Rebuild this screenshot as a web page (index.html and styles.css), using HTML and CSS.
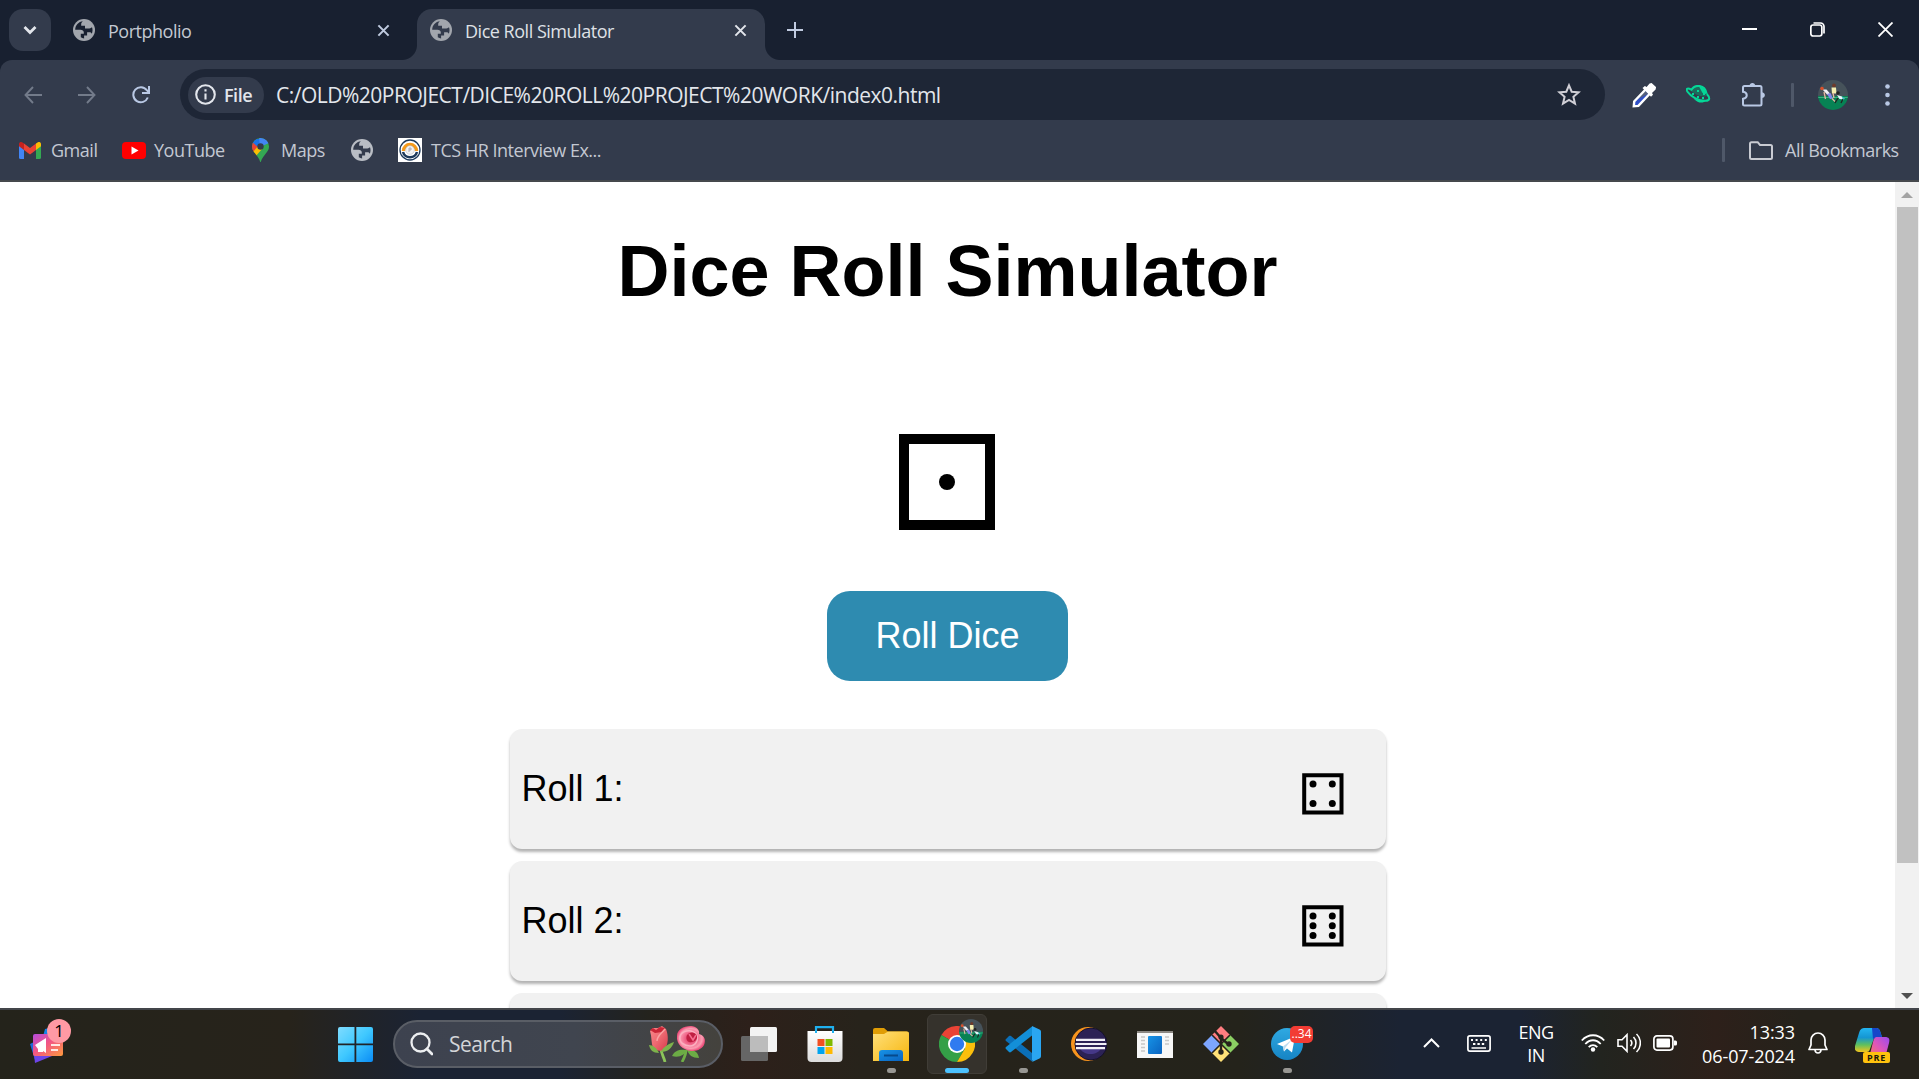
FILE: index.html
```html
<!DOCTYPE html>
<html lang="en">
<head>
<meta charset="utf-8">
<title>Dice Roll Simulator</title>
<link rel="stylesheet" href="styles.css">
</head>
<body>
<svg class="defs" width="0" height="0">
  <defs>
    <symbol id="globe" viewBox="0 0 22 22"><circle cx="11" cy="11" r="11" fill="currentColor"/><path d="M10 2.2C5.600 2.500 2.200 6.200 2.200 10.800h5.300c1.800 0 3.300 1 3.300 2.700v1.200h-3v3.600c1 .7 2.100 1.100 3.300 1.100v-3h3v-3.200h2.600c1 0 1.800.7 2.100 1.500.9-1.800 1-4.600.2-6.500-1 1-2.300 1.200-3.600 1.200H12V6.800H8.200V5c0-1.200.8-2.200 1.800-2.800z" fill="var(--cut)"/></symbol>
    <symbol id="cross" viewBox="0 0 14 14"><path d="M1.500 1.500l11 11M12.500 1.500l-11 11" stroke="currentColor" stroke-width="2.200" fill="none"/></symbol>
    <symbol id="avatar" viewBox="0 0 30 30"><clipPath id="ac"><circle cx="15" cy="15" r="15"/></clipPath><g clip-path="url(#ac)"><path fill="#46525a" d="M0 0h30v17H0z"/><path fill="#078254" d="M0 16h30v14H0z"/><path d="M0 17.500h30" stroke="#3fae80" stroke-width="1"/><circle cx="16" cy="5.500" r="1.900" fill="#6e3b2a"/><path fill="#f5efb0" d="M13.500 7.500h4.500l.5 6h-4.500z"/><path fill="#f0f0f5" d="M4.500 9.500l4 0 3.500 4-2.500 1.500z"/><circle cx="4" cy="8.500" r="1.800" fill="#d9512c"/><path fill="#8087ea" d="M9 14l3.500-1 2.500 5.500-3 .5z"/><path d="M6 12l1.500 7M14 18.500l3 3M15 13l1 5" stroke="#e5b7a0" stroke-width="1.300"/><circle cx="20" cy="13" r="1.800" fill="#222"/><path fill="#e8f4f8" d="M19 15l5 1.500 2 3-4.500-.5z"/><path fill="#35c0c8" d="M24 16.500l3 2-2 2z"/><path d="M20 18l-3 5M25 19l-2 4" stroke="#222" stroke-width="1.300"/></g></symbol>
    <linearGradient id="gWin" x1="0" y1="0" x2="1" y2="1"><stop offset="0" stop-color="#7fdcff"/><stop offset=".5" stop-color="#3fc8ff"/><stop offset="1" stop-color="#0a8cf5"/></linearGradient>
    <linearGradient id="gAd" x1="0" y1="0" x2="1" y2="1"><stop offset="0" stop-color="#b44be0"/><stop offset=".45" stop-color="#f25585"/><stop offset="1" stop-color="#ff9a3d"/></linearGradient>
    <linearGradient id="gStore" x1="0" y1="0" x2="0" y2="1"><stop offset="0" stop-color="#fff"/><stop offset="1" stop-color="#dcdcdc"/></linearGradient>
    <linearGradient id="gFold" x1="0" y1="0" x2="1" y2="1"><stop offset="0" stop-color="#ffe07a"/><stop offset="1" stop-color="#f7b50d"/></linearGradient>
    <linearGradient id="gBlue" x1="0" y1="0" x2="1" y2="1"><stop offset="0" stop-color="#1793e6"/><stop offset="1" stop-color="#0a63c0"/></linearGradient>
    <linearGradient id="gTg" x1="0" y1="0" x2="0" y2="1"><stop offset="0" stop-color="#2fa9e2"/><stop offset="1" stop-color="#1684c4"/></linearGradient>
    <linearGradient id="gCo" x1="0" y1="0" x2="0" y2="1"><stop offset="0" stop-color="#23b5f2"/><stop offset=".4" stop-color="#1596d2"/><stop offset=".7" stop-color="#5fc05e"/><stop offset="1" stop-color="#f4c51c"/></linearGradient>
    <linearGradient id="gCp" x1="1" y1="0" x2="0" y2="1"><stop offset="0" stop-color="#9a4bf0"/><stop offset=".5" stop-color="#e056b8"/><stop offset="1" stop-color="#ff7b52"/></linearGradient>
    <linearGradient id="gBud" x1="0" y1="0" x2="1" y2="1"><stop offset="0" stop-color="#f98a8c"/><stop offset=".5" stop-color="#ee6a72"/><stop offset="1" stop-color="#d83a4c"/></linearGradient>
    <radialGradient id="gRose"><stop offset="0" stop-color="#d22a55"/><stop offset=".45" stop-color="#f0668a"/><stop offset=".8" stop-color="#fb9db2"/><stop offset="1" stop-color="#ee4f7c"/></radialGradient>
  </defs>
</svg>

<header class="chrome">
  <div class="tabstrip">
    <button class="tab-search"><svg width="14" height="10" viewBox="0 0 14 10"><path d="M1.500 2l5.500 5.500L12.500 2" fill="none" stroke="#e3e6ec" stroke-width="2.800"/></svg></button>
    <div class="tab">
      <svg class="fav" width="22" height="22"><use href="#globe"/></svg>
      <span class="tab-title">Portpholio</span>
      <svg class="tab-x" width="13" height="13"><use href="#cross"/></svg>
    </div>
    <div class="tab active">
      <svg class="fav" width="22" height="22"><use href="#globe"/></svg>
      <span class="tab-title">Dice Roll Simulator</span>
      <svg class="tab-x" width="13" height="13"><use href="#cross"/></svg>
    </div>
    <svg class="new-tab" width="16" height="16" viewBox="0 0 16 16"><path d="M8 0v16M0 8h16" stroke="#c0cbe0" stroke-width="2"/></svg>
    <div class="win-controls">
      <svg width="15" height="15" viewBox="0 0 15 15"><path d="M0 7h15" stroke="#fff" stroke-width="2"/></svg>
      <svg width="15" height="15" viewBox="0 0 15 15" fill="none" stroke="#fff" stroke-width="1.700"><rect x=".85" y="3" width="11" height="11" rx="2.200"/><path d="M3.500 1h7a3.500 3.500 0 013.500 3.500v7"/></svg>
      <svg width="15" height="15" viewBox="0 0 15 15"><path d="M.5.5l14 14M14.500.5l-14 14" stroke="#fff" stroke-width="1.800"/></svg>
    </div>
  </div>

  <div class="toolbar">
    <svg class="nav dim" width="18" height="18" viewBox="0 0 18 18"><path d="M18 9H1.500M9 1L1.500 9 9 17" fill="none" stroke="currentColor" stroke-width="1.900"/></svg>
    <svg class="nav dim" width="18" height="18" viewBox="0 0 18 18"><path d="M0 9h16.500M9 1l7.500 8L9 17" fill="none" stroke="currentColor" stroke-width="1.900"/></svg>
    <svg class="nav" width="18" height="18" viewBox="0 0 18 18"><path d="M15.800 11.500A7.500 7.500 0 1 1 14.800 4.200L17 6.600M17 0v7h-7" fill="none" stroke="currentColor" stroke-width="2"/></svg>
    <div class="omnibox">
      <div class="chip">
        <svg width="21" height="21" viewBox="0 0 21 21"><circle cx="10.500" cy="10.500" r="9.300" fill="none" stroke="#e3e6ec" stroke-width="2.100"/><path d="M10.500 9.500v6M10.500 5.300v2.300" stroke="#e3e6ec" stroke-width="2.100"/></svg>
        <span>File</span>
      </div>
      <span class="url">C:/OLD%20PROJECT/DICE%20ROLL%20PROJECT%20WORK/index0.html</span>
      <svg class="star" width="24" height="24" viewBox="0 0 24 24"><path d="M12 2.300l2.700 6.400 6.900.6-5.200 4.500 1.600 6.800-6-3.600-6 3.600 1.600-6.800L2.400 9.300l6.900-.6z" fill="none" stroke="#d0cfd6" stroke-width="2"/></svg>
    </div>
    <div class="ext">
      <svg width="24" height="26" viewBox="0 0 24 26"><path d="M3 20L13 9l3.500 3.500L7 23l-4.500 1z" fill="#2f4fc7"/><path d="M6 17l7-8 3 3z" fill="#55607a"/><path d="M14 7L2.200 19.500l-.4 4.800 4.600-.4L18 11.500" fill="none" stroke="#fff" stroke-width="2.400"/><path d="M10.500 6l2.400-2 1.700 1 3-3.500 2-.5 4.500 4-.5 2.500-3.600 3.600 1 1.600-2 2z" fill="#fff"/></svg>
      <svg width="25" height="19" viewBox="0 0 25 19"><path d="M5 4.500C1 2.500-.3 4 1.500 6.800c3 4.500 11 9.200 18 9 4.500-.2 5-3 1-7" fill="none" stroke="#05d797" stroke-width="2"/><path d="M4.500 5.500C8-1.500 19-.5 20.500 9c.3 3-3 3.500-8 1.500-4-1.600-7-3.500-8-5z" fill="#1c6b5c"/><path d="M5 5.500C9-1.500 19-.5 20.500 8.500" fill="none" stroke="#05d797" stroke-width="2"/><path d="M13 1.500c5 .5 7 4 7.500 7.500l-4-1z" fill="#05d797"/><path d="M8 14l12 1.500c-2.500 3-8 3-12-1.500z" fill="#05d797"/><path d="M6 9h2M11 6h2M11 12h2M16 13h2M17 9h2" stroke="#05d797" stroke-width="1.800"/></svg>
      <svg width="25" height="25" viewBox="0 0 25 25"><path d="M3.500 4h15.500a1.500 1.500 0 011.500 1.500v16.500a1.500 1.500 0 01-1.500 1.500H3.500A1.500 1.500 0 012 22v-5.200c5-.8 5-6.200 0-7V5.500A1.500 1.500 0 013.500 4z" fill="none" stroke="#b9c8e4" stroke-width="2"/><path d="M8.500 4c0-4 5.800-4 5.800 0zM20.500 10.200c4.500 0 4.500 5.800 0 5.800z" fill="#b9c8e4"/></svg>
    </div>
    <i class="sep"></i>
    <svg class="profile" width="30" height="30"><use href="#avatar"/></svg>
    <svg class="dots" width="5" height="22" viewBox="0 0 5 22" fill="#b9c8e4"><circle cx="2.500" cy="2.500" r="2.300"/><circle cx="2.500" cy="11" r="2.300"/><circle cx="2.500" cy="19.500" r="2.300"/></svg>
  </div>

  <nav class="bookmarks">
    <a class="bm b-gmail"><svg width="22" height="17" viewBox="0 0 22 17"><path d="M0 2v13.500A1.500 1.500 0 001.500 17H5V6z" fill="#4285f4"/><path d="M22 2v13.500a1.500 1.500 0 01-1.500 1.500H17V6z" fill="#34a853"/><path d="M17 1.500V8l5-3.800V2c0-2-2.200-2.600-3.500-1.500z" fill="#fbbc04"/><path d="M5 8V1.500L11 6l6-4.500V8l-6 4.500z" fill="#ea4335"/><path d="M0 2v2.200L5 8V1.500L3.500.5C2.200-.6 0 0 0 2z" fill="#c5221f"/></svg><span>Gmail</span></a>
    <a class="bm b-yt"><svg width="24" height="17" viewBox="0 0 24 17"><rect width="24" height="17" rx="4" fill="#f00"/><path d="M9.500 4.500v8l7-4z" fill="#fff"/></svg><span>YouTube</span></a>
    <a class="bm b-maps"><svg width="17" height="24" viewBox="0 0 17 24"><clipPath id="pin"><path d="M8.500 0A8.400 8.400 0 0117 8.500c0 4-2.500 6-4.500 8.700C10.500 20 9.700 21 9 23.400c-.2.800-.8.800-1 0-.7-2.400-1.500-3.600-3.500-6.200C2.500 14.500 0 12.500 0 8.500A8.400 8.400 0 018.500 0z"/></clipPath><g clip-path="url(#pin)"><path d="M0 0h17v24H0z" fill="#34a853"/><path d="M0 5l6 4 7-8H4z" fill="#1a73e8"/><path d="M7 0h10v5L8 9z" fill="#4285f4"/><path d="M0 4l6 5-6 6z" fill="#ea4335"/><path d="M1 14l6-7 4 3-8 9z" fill="#fbbc04"/></g><circle cx="8.500" cy="8.500" r="3.200" fill="#333b4c"/></svg><span>Maps</span></a>
    <a class="bm b-globe"><svg width="22" height="22"><use href="#globe"/></svg></a>
    <a class="bm b-tcs"><svg width="24" height="24" viewBox="0 0 24 24"><path fill="#fff" d="M0 0h24v24H0z"/><circle cx="12" cy="12" r="10" fill="none" stroke="#1d3a5c" stroke-width="1.300"/><path d="M5.500 13a6.500 6.500 0 1113 0" fill="none" stroke="#f49a1c" stroke-width="3.500"/><path d="M5 14a7.300 7.300 0 0014 0" fill="none" stroke="#1d3a5c" stroke-width="2.600"/><circle cx="12" cy="12" r="4.300" fill="#f3f3f3" stroke="#b9c0c8" stroke-width=".6"/><path d="M11 14v-4h2v2h-2" fill="none" stroke="#99a" stroke-width=".8"/></svg><span>TCS HR Interview Ex...</span></a>
    <i class="sep"></i>
    <a class="bm b-all"><svg width="24" height="19" viewBox="0 0 24 19"><path d="M2.500 1.200h6.200L11 4h10.500A1.500 1.500 0 0123 5.500v11a1.500 1.500 0 01-1.500 1.500h-19A1.500 1.500 0 011 16.500v-13.800a1.500 1.500 0 011.500-1.500z" fill="none" stroke="#c9cbd2" stroke-width="2"/></svg><span>All Bookmarks</span></a>
  </nav>
</header>

<div class="viewport">
  <main class="page">
    <h1>Dice Roll Simulator</h1>
    <svg class="die" width="97" height="96" viewBox="0 0 97 96"><rect x="5" y="5" width="86" height="86" fill="none" stroke="#000" stroke-width="10"/><circle cx="48" cy="48" r="8"/></svg>
    <button class="roll-btn">Roll Dice</button>
    <ul class="history">
      <li><span>Roll 1:</span><svg width="42" height="42" viewBox="0 0 42 42"><path d="M2.200 2.200h37.300v37.300H2.200z" fill="none" stroke="#000" stroke-width="4"/><circle cx="11" cy="11" r="3.500"/><circle cx="30.300" cy="11" r="3.500"/><circle cx="11" cy="30.500" r="3.500"/><circle cx="30.300" cy="30.500" r="3.500"/></svg></li>
      <li><span>Roll 2:</span><svg width="42" height="42" viewBox="0 0 42 42"><path d="M2.200 2.200h37.300v37.300H2.200z" fill="none" stroke="#000" stroke-width="4"/><circle cx="11" cy="11" r="3.500"/><circle cx="30.300" cy="11" r="3.500"/><circle cx="11" cy="20.700" r="3.500"/><circle cx="30.300" cy="20.700" r="3.500"/><circle cx="11" cy="30.500" r="3.500"/><circle cx="30.300" cy="30.500" r="3.500"/></svg></li>
      <li></li>
    </ul>
  </main>
  <div class="scrollbar">
    <svg width="12" height="6" viewBox="0 0 12 6"><path d="M6 0l6 6H0z" fill="#a3a3a3"/></svg>
    <div class="thumb"></div>
    <svg class="down" width="12" height="6" viewBox="0 0 12 6"><path d="M6 6l6-6H0z" fill="#505050"/></svg>
  </div>
</div>

<footer class="taskbar">
  <div class="widget">
    <svg width="34" height="38" viewBox="0 0 34 38"><path d="M15 3l13-3 4 14H12z" fill="#1583e8"/><path d="M0 18l6-3 16 12-17 7z" fill="#2268d8"/><path d="M4 28h23L5 37z" fill="#6d45e8"/><rect x="3" y="8" width="30" height="22" rx="2" fill="url(#gAd)"/><path d="M5 19l11-7v15l-3-2v1H8v-3z" fill="#fff"/><path d="M21 19h9M21 24h7" stroke="#ffe9e4" stroke-width="2"/></svg>
    <b class="w-badge">1</b>
  </div>
  <div class="apps">
    <div class="app start"><svg width="35" height="35" viewBox="0 0 35 35"><path d="M2 0h14.500v16.500H0V2a2 2 0 012-2zM18.300 0H33a2 2 0 012 2v14.500H18.300zM0 18.300h16.500V35H2a2 2 0 01-2-2zM18.300 18.300H35V33a2 2 0 01-2 2H18.300z" fill="url(#gWin)"/></svg></div>
    <div class="search">
      <svg width="23" height="24" viewBox="0 0 23 24"><circle cx="10.500" cy="10.500" r="9" fill="none" stroke="#eceef0" stroke-width="2.300"/><path d="M17 17l5 5" stroke="#eceef0" stroke-width="2.800" stroke-linecap="round"/></svg>
      <span>Search</span>
      <svg class="roses" width="58" height="36" viewBox="0 0 58 36"><path d="M13 22c0 6 3 9 4 14" fill="none" stroke="#8cc45a" stroke-width="2.800"/><path d="M2 5l3-3 5 0 4-2 4 3c3 8 2 15-1 20-4 3-9 2-12-1C3 17 4 11 2 5z" fill="url(#gBud)"/><path d="M2 4l3-2 3 2 4-3 5 1-3 4-7 1z" fill="#c92536"/><path d="M17 3c-4 5-8 7-8 12" fill="none" stroke="#f9a2a2" stroke-width="1.500"/><path d="M1 19c4 0 8 3 10 8-6 0-9-3-10-8zM26 16c-6 2-11 5-13 10 7 0 11-4 13-10z" fill="#7db24c"/><path d="M38 24c0 5-2 8-4 12" stroke="#6fae46" stroke-width="2.800" fill="none"/><path d="M24 30c3-6 8-7 15-6-2 5-8 8-15 6zM39 24c7-1 11 2 12 8-7 0-10-3-12-8z" fill="#6cab45"/><path d="M29 10c0-6 6-10 14-10 5 0 9 4 8 8 6 2 7 6 5 11-3 5-8 6-13 6-8-1-15-7-14-15z" fill="url(#gRose)"/><path d="M32 11c1-6 11-9 16-3 4 6-1 12-6 12-6 0-11-4-10-9z" fill="none" stroke="#fbb0c0" stroke-width="1.500"/><path d="M39 9c3-4 9-3 10 1s-4 7-8 6c-3-1-3-5-2-7z" fill="#c01f42"/><path d="M41 8l4 6 3-5" fill="none" stroke="#f76d90" stroke-width="1.500"/></svg>
    </div>
    <div class="app"><svg width="36" height="34" viewBox="0 0 36 34"><rect y="9" width="27" height="25" rx="1.500" fill="#666"/><rect x="9" width="27" height="25" rx="1.500" fill="#f3f3f3"/><path d="M9 9h18v16H9z" fill="#bcbcbc"/></svg></div>
    <div class="app"><svg width="36" height="36" viewBox="0 0 36 36"><path d="M9 7V1.200h17V7" fill="none" stroke="#1fb0ee" stroke-width="2.200"/><path d="M.5 5h35v27a4 4 0 01-4 4h-27a4 4 0 01-4-4z" fill="url(#gStore)"/><path d="M9 2v5M26 2v5" stroke="#1fb0ee" stroke-width="2"/><path d="M10.500 13h7v7h-7z" fill="#f25022"/><path d="M18.500 13h7v7h-7z" fill="#7fba00"/><path d="M10.500 21h7v7h-7z" fill="#00a4ef"/><path d="M18.500 21h7v7h-7z" fill="#ffb900"/></svg></div>
    <div class="app run"><svg width="36" height="33" viewBox="0 0 36 33"><path d="M0 9V2a2 2 0 012-2h9l4 3.500H33a3 3 0 013 3V12H0z" fill="#e09d05"/><path d="M0 6h11l4-2.500H34a2 2 0 012 2V33H0z" fill="url(#gFold)"/><path d="M6 33V25a3 3 0 013-3h18a3 3 0 013 3v8z" fill="url(#gBlue)"/><path d="M11 27.500h14" stroke="#064a8c" stroke-width="2"/></svg></div>
    <div class="app run current"><svg width="36" height="36" viewBox="0 0 36 36"><path d="M18 18L2.400 9A18 18 0 0133.600 9z" fill="#ea4335"/><path d="M18 18L2.400 9A18 18 0 0018 36l8-13.500z" fill="#34a047"/><path d="M18 9h15.600A18 18 0 0118 36l8-13.500z" fill="#fbbf0c"/><circle cx="18" cy="18" r="9" fill="#fff"/><circle cx="18" cy="18" r="7.200" fill="#2f7bf0"/></svg><svg class="mini" width="24" height="24"><use href="#avatar"/></svg></div>
    <div class="app run"><svg width="36" height="36" viewBox="0 0 36 36"><path d="M1 13l3-3c.6-.5 1.300-.5 2 0L27 27v8.500L1 15c-.7-.6-.7-1.300 0-2z" fill="#0b6fb8"/><path d="M1 23l3 3c.6.500 1.300.5 2 0L27 9.500V.5L1 21c-.7.600-.7 1.300 0 2z" fill="#138fd8"/><path d="M27 0l7.500 3.500A2.500 2.500 0 0136 6v24c0 1-.5 2-1.500 2.500L27 36c1-1 0-2 0-2z" fill="#2aa6f2"/></svg></div>
    <div class="app"><svg width="36" height="34" viewBox="0 0 36 34"><circle cx="17" cy="17" r="17" fill="#f7941e"/><circle cx="20" cy="17" r="16" fill="#2c2255" stroke="#14102c" stroke-width="1"/><path d="M9 21h21c-3 8-18 8-21 0z" fill="#453888"/><path d="M5 12.800h29M4.500 17h31M5 21.200h29" stroke="#f1f0f6" stroke-width="2.200"/></svg></div>
    <div class="app"><svg width="36" height="27" viewBox="0 0 36 27"><path d="M0 0h36v27H0z" fill="#f7f7f7"/><path d="M0 0h36v2H0z" fill="#8b8782"/><path d="M4 6h4M4 9.500h4M4 13h4M4 16.500h4M4 20h4M28 6h4M28 9.500h4M28 13h4" stroke="#c8c8c8" stroke-width="1.600"/><rect x="11" y="5" width="14" height="18" rx="1" fill="url(#gBlue)"/></svg></div>
    <div class="app"><svg width="36" height="36" viewBox="0 0 36 36"><path d="M18 0l9 9-9 9-9-9z" fill="#ff7d80"/><path d="M27 9l9 9-9 9-9-9z" fill="#8bcf63"/><path d="M18 18l9 9-9 9-9-9z" fill="#ffe178"/><path d="M9 9l9 9-9 9-9-9z" fill="#7da6ff"/><path d="M9 9l18 18M27 9L9 27" stroke="#26231c" stroke-width="1.600"/><path d="M11 4l7 8v14M18 12l7 6" fill="none" stroke="#26231c" stroke-width="2.400"/><circle cx="18" cy="11" r="2.600" fill="#26231c"/><circle cx="26" cy="18" r="2.700" fill="#26231c"/><circle cx="18" cy="26" r="2.700" fill="#26231c"/></svg></div>
    <div class="app run"><svg width="32" height="32" viewBox="0 0 32 32"><circle cx="16" cy="16" r="16" fill="url(#gTg)"/><path d="M6 16l18-7.500-3 16-5-4-3 3-1-5z" fill="#fff"/><path d="M12 18.500l9-7-6.500 8-1.500 4z" fill="#bcdcf0"/></svg><b class="tg-badge">..34</b></div>
  </div>
  <div class="tray">
    <svg class="chev" width="17" height="10" viewBox="0 0 17 10"><path d="M1 9l7.500-7.500L16 9" fill="none" stroke="#fff" stroke-width="2"/></svg>
    <svg class="kbd" width="24" height="17" viewBox="0 0 24 17"><rect x=".9" y=".9" width="22.200" height="15.200" rx="2" fill="none" stroke="#fff" stroke-width="1.700"/><path d="M4 5h16" stroke="#fff" stroke-width="2" stroke-dasharray="2 2.600"/><path d="M6 9h12" stroke="#fff" stroke-width="2" stroke-dasharray="2.400 2"/><path d="M4.500 13h14.500" stroke="#fff" stroke-width="1.500"/></svg>
    <div class="lang"><span>ENG</span><span>IN</span></div>
    <svg class="wifi" width="24" height="18" viewBox="0 0 24 18"><path d="M.8 6.500c6.500-7 16-7 22.400 0M4.300 10c4.600-5 10.800-5 15.400 0M7.700 13.200c2.600-2.800 6-2.800 8.600 0" fill="none" stroke="#fff" stroke-width="1.800"/><circle cx="12" cy="15.500" r="2.200" fill="#fff"/></svg>
    <svg class="vol" width="24" height="20" viewBox="0 0 24 20" fill="none" stroke="#fff" stroke-width="1.600"><path d="M1 6.700h4l5-5v16.600l-5-5H1z"/><path d="M13.500 7a4.500 4.500 0 010 6M16.500 4a8.500 8.500 0 010 12M19.500 1a12.500 12.500 0 010 18"/></svg>
    <svg class="bat" width="24" height="16" viewBox="0 0 24 16"><rect x=".9" y=".9" width="19" height="14.200" rx="3" fill="none" stroke="#fff" stroke-width="1.700"/><rect x="3.500" y="3.500" width="13.500" height="9" rx="1" fill="#fff"/><path d="M21 5.500h1.500A1.500 1.500 0 0124 7v2a1.500 1.500 0 01-1.500 1.500H21z" fill="#fff"/></svg>
    <div class="clock"><span class="time">13:33</span><span class="date">06-07-2024</span></div>
    <svg class="bell" width="20" height="22" viewBox="0 0 20 22"><path d="M10 1a7 7 0 00-7 7v5L1 17.500h18L17 13V8a7 7 0 00-7-7zM7 18c.5 4 5.500 4 6 0" fill="none" stroke="#fff" stroke-width="1.700" stroke-linejoin="round"/></svg>
    <div class="copilot">
      <svg width="35" height="30" viewBox="0 0 35 30"><path d="M10 0h11c3 0 4 2 5 6l1 3h-5c-2 0-3 1-4 4l-3 8c-1 3-2 3-5 3H4c-3 0-5-2-4-6L4 5c1-4 3-5 6-5z" fill="url(#gCo)"/><path d="M17 0h4c3 0 4 2 5 6l1 3h-5l-4 2z" fill="#1746c9"/><path d="M22 9h8c4 0 5 2 4 6l-4 15H14l4-16c1-4 2-5 4-5z" fill="url(#gCp)"/></svg>
      <b>PRE</b>
    </div>
  </div>
</footer>
</body>
</html>
```
FILE: styles.css
```css
* { box-sizing: border-box; }
body {
  margin: 0;
  width: 1919px;
  height: 1079px;
  overflow: hidden;
  display: flex;
  flex-direction: column;
  background: #fff;
  font-family: "Open Sans", "Noto Sans", sans-serif;
}
svg { display: block; flex: none; }
button { border: 0; padding: 0; }
.defs { position: absolute; }

/* browser frame */
.chrome {
  --cut: #333b4c;
  height: 182px;
  flex: none;
  background: #182030;
  border-bottom: 2px solid #45484c;
  color: #c3c8d2;
  font-size: 18px;
  letter-spacing: -.48px;
  white-space: nowrap;
}
.tabstrip { height: 60px; display: flex; align-items: flex-start; padding: 9px 26px 0 9px; }
.tab-search {
  width: 42px; height: 42px;
  border-radius: 14px;
  background: #333b4c;
  display: flex; align-items: center; justify-content: center;
}
.tab {
  --cut: #182030;
  width: 348px;
  height: 51px;
  margin-left: 9px;
  padding: 0 18px 9px 13px;
  display: flex;
  align-items: center;
}
.tab .fav { color: #a2a6ad; }
.tab-title { margin-left: 13px; padding-top: 1px; flex: 1; }
.tab-x { color: #c0cbe0; }
.active {
  --cut: #333b4c;
  position: relative;
  background: #333b4c;
  border-radius: 15px 15px 0 0;
  color: #dfe1e6;
}
.active .tab-x { color: #e3e6ec; }
.active::before, .active::after {
  content: "";
  position: absolute;
  bottom: 0;
  width: 15px; height: 15px;
}
.active::before { left: -15px; background: radial-gradient(circle at 0 0, transparent 14.500px, #333b4c 15.500px); }
.active::after { right: -15px; background: radial-gradient(circle at 100% 0, transparent 14.500px, #333b4c 15.500px); }
.new-tab { margin: 13px 0 0 22px; }
.win-controls { margin: 13px 0 0 auto; display: flex; gap: 53px; }

.toolbar {
  height: 69px;
  background: #333b4c;
  border-radius: 12px 12px 0 0;
  display: flex;
  align-items: center;
  padding: 0 29px 0 24px;
}
.nav { margin-right: 36px; color: #b9c8e4; }
.nav.dim { color: #737b8a; }
.omnibox {
  width: 1425px; height: 51px;
  margin-left: -6px;
  border-radius: 26px;
  background: #1e2636;
  display: flex;
  align-items: center;
  padding: 0 24px 0 8px;
}
.chip {
  width: 76px; height: 36px;
  border-radius: 18px;
  background: #333b4c;
  display: flex; align-items: center;
  padding-left: 7px;
  gap: 8px;
  color: #e3e6ec;
  font-weight: 600;
}
.url { margin-left: 12px; flex: 1; color: #e3e6ec; font-size: 21px; letter-spacing: -.5px; }
.ext { margin-left: 27px; display: flex; align-items: center; gap: 30px; }
.sep { width: 3px; height: 24px; border-radius: 1px; background: #4f5869; }
.toolbar .sep { margin-left: 25px; }
.profile { margin-left: 24px; }
.dots { margin-left: auto; }

.bookmarks { height: 51px; background: #333b4c; display: flex; align-items: flex-start; padding: 7px 20px 0 19px; }
.bm { height: 28px; display: flex; align-items: center; }
.b-gmail { width: 103px; gap: 10px; }
.b-yt { width: 130px; gap: 8px; }
.b-maps { width: 99px; gap: 12px; }
.b-globe { width: 47px; color: #b9bdc4; }
.b-tcs { width: 210px; gap: 9px; }
.b-all { gap: 12px; margin-left: 24px; width: 150px; }
.bookmarks .sep { margin: 2px 0 0 auto; }

/* page */
.viewport { height: 826px; flex: none; display: flex; overflow: hidden; }
.page {
  flex: 1;
  display: flex;
  flex-direction: column;
  align-items: center;
  font-family: "Liberation Sans", Arial, sans-serif;
}
h1 { margin: 48px 0 0; font-size: 72px; line-height: 82px; }
.die { margin-top: 122px; }
.roll-btn {
  margin-top: 61px;
  width: 241px; height: 90px;
  flex: none;
  border-radius: 23px;
  background: #2e8bb0;
  color: #fff;
  font: 36px "Liberation Sans", Arial, sans-serif;
}
.history { list-style: none; margin: 48px 0 0; padding: 0; width: 876px; display: flex; flex-direction: column; gap: 12px; }
.history li {
  height: 120px;
  border-radius: 12px;
  background: #f1f1f1;
  box-shadow: 0 3px 3px rgba(0, 0, 0, .3);
  display: flex;
  align-items: center;
  justify-content: space-between;
  padding: 0 42px 0 12px;
  font-size: 36px;
}
.history svg { margin-top: 10px; }
.scrollbar { width: 24px; background: #f1f1f1; display: flex; flex-direction: column; align-items: center; padding: 10px 0 9px; }
.thumb { margin-top: 9px; width: 21px; height: 656px; background: #c1c1c1; }
.down { margin-top: auto; }

/* taskbar */
.taskbar {
  height: 71px;
  flex: none;
  border-top: 2px solid #43454a;
  display: flex;
  background: linear-gradient(90deg, #24231b 0, #27231b 290px, #1b2333 420px, #1b2333 560px, #24231d 650px, #2d201a 750px, #27231b 860px, #24231b 1240px, #1b2333 1400px, #1b2333 1520px, #22241f 1600px, #2d201a 1715px, #25221b 1800px);
  color: #fff;
  white-space: nowrap;
}
.widget { width: 326px; padding: 16px 0 0 30px; position: relative; }
.w-badge {
  position: absolute; left: 47px; top: 9px;
  width: 24px; height: 24px;
  border-radius: 50%;
  background: #ff99a4;
  color: #000;
  font-size: 17px; font-weight: 400; line-height: 23px; text-align: center;
}
.apps { display: flex; gap: 6px; padding-top: 4px; }
.app { width: 60px; height: 60px; border-radius: 6px; position: relative; display: flex; align-items: center; justify-content: center; }
.start { padding-right: 1px; }
.app.run::after {
  content: "";
  position: absolute;
  bottom: 1px;
  width: 9px; height: 5px;
  border-radius: 3px;
  background: #989793;
}
.app.current { background: #35322c; border: 1px solid #403d37; }
.app.current::after { width: 24px; background: #4cc2ff; bottom: 0; }
.mini { position: absolute; left: 31px; top: 4px; }
.search {
  width: 330px; height: 48px;
  margin: 6px 0 0 1px;
  border-radius: 24px;
  border: 2px solid #5a5e66;
  background: linear-gradient(90deg, #3d424f, #40454f 55%, #44423d);
  display: flex;
  align-items: center;
  padding: 0 15px 0 15px;
  color: #d3d5d8;
  font-size: 21px;
  letter-spacing: -.5px;
}
.search span { margin-left: 16px; }
.roses { margin-left: auto; }
.tg-badge {
  position: absolute; left: 33px; top: 12px;
  width: 23px; height: 17px;
  border-radius: 5px;
  background: #f23c34;
  font-size: 12px; font-weight: 400; line-height: 16px; text-align: center;
}
.tray { margin-left: auto; width: 502px; padding: 0 29px 0 6px; display: flex; align-items: center; height: 66px; font-size: 18px; letter-spacing: -.1px; }
.kbd { margin-left: 27px; }
.lang { width: 60px; margin: 2px 0 0 15px; display: flex; flex-direction: column; align-items: center; line-height: 23px; letter-spacing: -.5px; }
.wifi { margin-left: 15px; }
.vol { margin-left: 12px; }
.bat { margin-left: 12px; }
.clock { width: 105px; margin: 1px 0 0 13px; display: flex; flex-direction: column; align-items: flex-end; line-height: 24px; }
.bell { margin-left: 13px; }
.copilot { margin: 4px 0 0 auto; width: 35px; height: 35px; position: relative; }
.copilot b {
  position: absolute; right: 0; bottom: 0;
  width: 27px; height: 11px;
  border-radius: 2px;
  background: #ffc20e;
  color: #201a08;
  font-size: 9px; line-height: 11px; text-align: center; letter-spacing: .8px;
}
```
